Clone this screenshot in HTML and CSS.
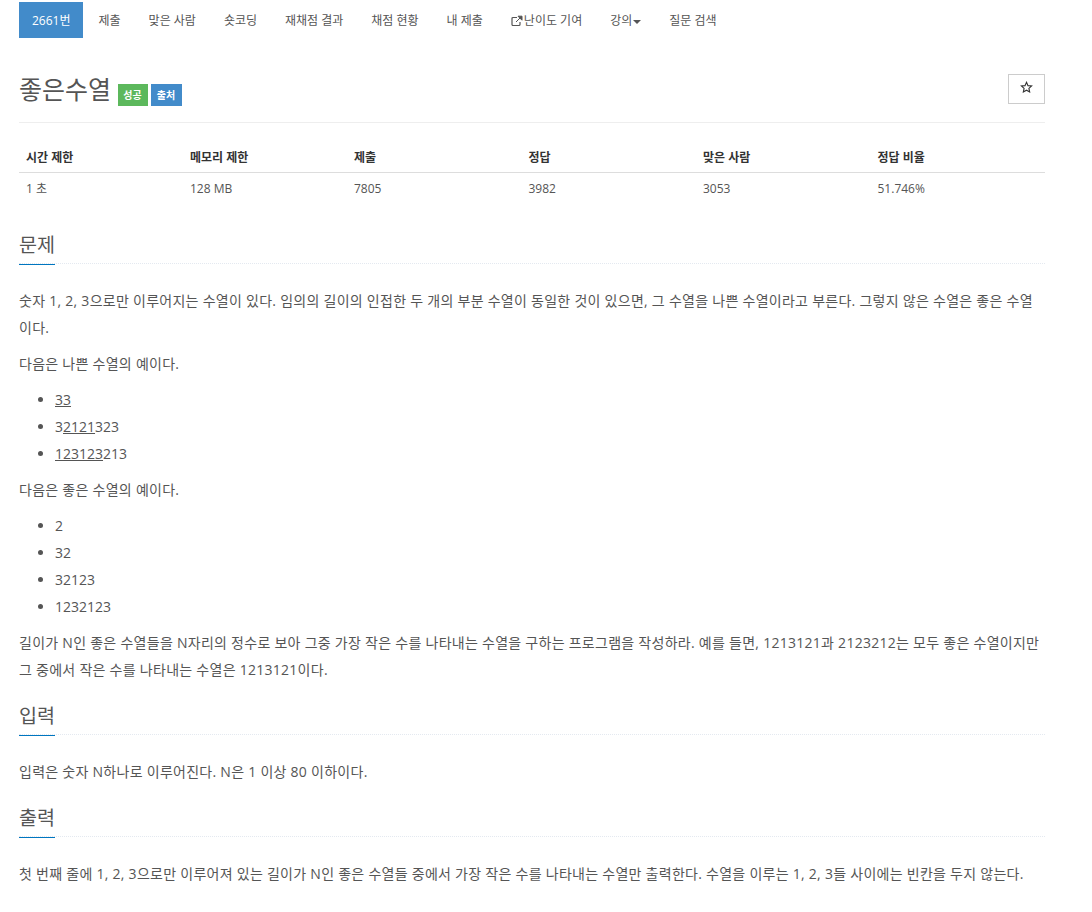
FILE: index.html
```html
<!DOCTYPE html>
<html lang="ko">
<head>
    <meta charset="UTF-8">
    <meta name="viewport" content="width=device-width, initial-scale=1.0">
    <title>좋은수열</title>
    <link rel="stylesheet" href="styles.css">
</head>
<body>
    <div class="page">
        <ul class="tabs">
            <li class="tab active">2661번</li>
            <li class="tab">제출</li>
            <li class="tab">맞은 사람</li>
            <li class="tab">숏코딩</li>
            <li class="tab">재채점 결과</li>
            <li class="tab">채점 현황</li>
            <li class="tab">내 제출</li>
            <li class="tab">
                <svg class="ext-icon" viewBox="0 0 12 12" width="12" height="12">
                    <path d="M9 7v2.5a1 1 0 0 1-1 1H2a1 1 0 0 1-1-1v-6a1 1 0 0 1 1-1h4" fill="none" stroke="#555" stroke-width="1.2"/>
                    <path d="M5 7l5-5M7 1.2h4v4z" fill="#555" stroke="#555" stroke-width="1"/>
                </svg>난이도 기여
            </li>
            <li class="tab">강의<span class="caret"></span></li>
            <li class="tab">질문 검색</li>
        </ul>

        <div class="title-row">
            <h1 class="title">좋은수열 <span class="label green">성공</span><span class="label blue">출처</span></h1>
            <button class="star-btn">
                <svg viewBox="0 0 14 14" width="13" height="13">
                    <path d="M7 1.4l1.6 3.6 3.9.4-2.9 2.6.8 3.8L7 9.9l-3.4 1.9.8-3.8L1.5 5.4l3.9-.4z" fill="none" stroke="#333" stroke-width="1.2"/>
                </svg>
            </button>
        </div>

        <table class="info">
            <thead>
                <tr>
                    <th class="c1">시간 제한</th>
                    <th class="c2">메모리 제한</th>
                    <th class="c3">제출</th>
                    <th class="c3">정답</th>
                    <th class="c3">맞은 사람</th>
                    <th>정답 비율</th>
                </tr>
            </thead>
            <tbody>
                <tr>
                    <td>1 초</td>
                    <td>128 MB</td>
                    <td>7805</td>
                    <td>3982</td>
                    <td>3053</td>
                    <td>51.746%</td>
                </tr>
            </tbody>
        </table>

        <section class="section first">
            <div class="headline"><h2>문제</h2></div>
            <p>숫자 1, 2, 3으로만 이루어지는 수열이 있다. 임의의 길이의 인접한 두 개의 부분 수열이 동일한 것이 있으면, 그 수열을 나쁜 수열이라고 부른다. 그렇지 않은 수열은 좋은 수열이다.</p>
            <p>다음은 나쁜 수열의 예이다.</p>
            <ul class="list">
                <li><u>33</u></li>
                <li>3<u>2121</u>323</li>
                <li><u>123123</u>213</li>
            </ul>
            <p>다음은 좋은 수열의 예이다.</p>
            <ul class="list">
                <li>2</li>
                <li>32</li>
                <li>32123</li>
                <li>1232123</li>
            </ul>
            <p>길이가 N인 좋은 수열들을 N자리의 정수로 보아 그중 가장 작은 수를 나타내는 수열을 구하는 프로그램을 작성하라. 예를 들면, 1213121과 2123212는 모두 좋은 수열이지만 그 중에서 작은 수를 나타내는 수열은 1213121이다.</p>
        </section>

        <section class="section">
            <div class="headline"><h2>입력</h2></div>
            <p>입력은 숫자 N하나로 이루어진다. N은 1 이상 80 이하이다.</p>
        </section>

        <section class="section">
            <div class="headline"><h2>출력</h2></div>
            <p>첫 번째 줄에 1, 2, 3으로만 이루어져 있는 길이가 N인 좋은 수열들 중에서 가장 작은 수를 나타내는 수열만 출력한다. 수열을 이루는 1, 2, 3들 사이에는 빈칸을 두지 않는다.</p>
        </section>

        <div class="samples">
            <div class="headline"><h2>예제 입력 1</h2></div>
            <div class="headline"><h2>예제 출력 1</h2></div>
        </div>
    </div>
</body>
</html>
```

FILE: styles.css
```css
html, body {
    height: 912px;
    overflow: hidden;
}
body {
    margin: 0;
    background: #fff;
    color: #555;
    font-family: "Open Sans", "Noto Sans CJK KR", sans-serif;
    font-size: 14px;
    line-height: 27px;
}
.page {
    width: 1026px;
    margin-left: 19px;
}
.tabs {
    display: flex;
    list-style: none;
    margin: 2px 0 0;
    padding: 0;
    height: 36px;
}
.tab {
    padding: 0 13px;
    margin-right: 2px;
    font-size: 12px;
    line-height: 37px;
    color: #555;
    white-space: nowrap;
}
.tab.active {
    padding-right: 12px;
    margin-right: 3px;
    background: #428bca;
    color: #fff;
}
.ext-icon {
    vertical-align: -2px;
    margin-right: 1px;
}
.caret {
    display: inline-block;
    margin-left: 1px;
    vertical-align: middle;
    border-top: 4px solid #555;
    border-left: 4px solid transparent;
    border-right: 4px solid transparent;
}
.title-row {
    display: flex;
    justify-content: space-between;
    align-items: flex-start;
    margin-top: 36px;
    height: 48px;
    border-bottom: 1px solid #eee;
}
.title {
    margin: 0;
    font-size: 25px;
    font-weight: 400;
    line-height: 30px;
    color: #555;
}
.label {
    display: inline-block;
    height: 22px;
    width: 30px;
    font-size: 10px;
    font-weight: 700;
    line-height: 22px;
    text-align: center;
    color: #fff;
    vertical-align: 0;
}
.label.green {
    background: #5cb85c;
}
.label.blue {
    margin-left: 3px;
    width: 31px;
    background: #428bca;
}
.star-btn {
    width: 37px;
    height: 30px;
    padding: 0;
    background: #fff;
    border: 1px solid #ccc;
}
.info {
    width: 100%;
    margin-top: 19px;
    border-collapse: collapse;
    font-size: 12px;
}
.info th {
    height: 30px;
    padding: 0 7px;
    text-align: left;
    font-weight: 700;
    color: #333;
    border-bottom: 1px solid #ddd;
}
.info td {
    height: 30px;
    padding: 0 7px;
    color: #555;
}
.c1 {
    width: 150px;
}
.c2 {
    width: 150px;
}
.c3 {
    width: 160.5px;
}
.section {
    margin-top: 19px;
}
.section.first {
    margin-top: 28px;
}
.headline {
    position: relative;
    border-bottom: 1px dotted #e4e9f0;
    height: 32px;
}
.headline h2 {
    display: inline-block;
    margin: 0;
    height: 33px;
    border-bottom: 1px solid #0076c0;
    font-size: 19.6px;
    font-weight: 400;
    line-height: 28px;
    color: #555;
}
.section p {
    margin: 23px 0 9px;
    letter-spacing: 0.27px;
}
.section p + p,
.list + p {
    margin-top: 9px;
}
.list {
    margin: 9px 0;
    padding-left: 36px;
}
.samples {
    display: grid;
    grid-template-columns: 1fr 1fr;
    gap: 22px;
    margin-top: 21px;
}
```
